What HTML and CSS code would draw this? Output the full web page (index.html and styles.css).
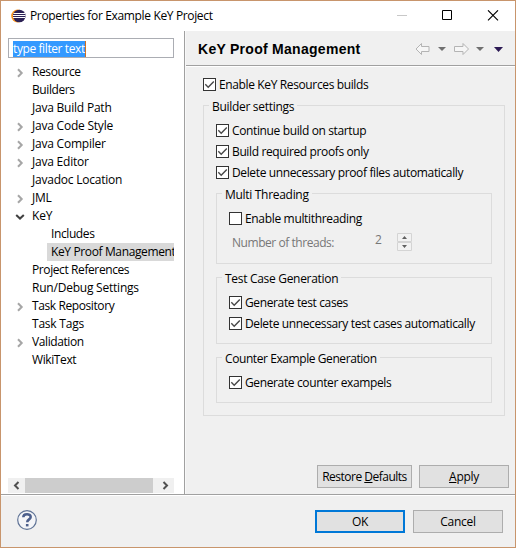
FILE: index.html
```html
<!DOCTYPE html>
<html lang="en">
<head>
<meta charset="utf-8">
<title>Properties for Example KeY Project</title>
<link rel="stylesheet" href="styles.css">
</head>
<body>
<svg width="0" height="0" class="defs">
  <symbol id="check" viewBox="0 0 13 13"><path d="M2.3 6.3 5.2 9.2 10.8 3.4" fill="none" stroke="#484848" stroke-width="1.4"/></symbol>
  <symbol id="closed" viewBox="0 0 8 10"><path d="M2 1.2 5.700 5 2 8.800" fill="none" stroke="#a6a6a6" stroke-width="2"/></symbol>
  <symbol id="open" viewBox="0 0 10 8"><path d="M1.2 2 5 5.6 8.8 2" fill="none" stroke="#404040" stroke-width="2"/></symbol>
</svg>
<div class="window">
  <header class="titlebar">
    <svg class="logo" width="15" height="14" viewBox="0 0 15 14"><circle cx="6.6" cy="7" r="6.4" fill="#f7941e"/><circle cx="8.300" cy="7" r="6.300" fill="#2c2255"/><path d="M2.500 4.500h11.500M2 6.500h12.500M2 8.500h12" stroke="#fff" stroke-width="1"/></svg>
    <span class="caption">Properties for Example KeY Project</span>
    <svg class="controls" width="104" height="12" viewBox="0 0 104 12"><path d="M0 5.5h10" stroke="#c8c8c8"/><path d="M45.500 .5h9v9h-9z" fill="none" stroke="#000"/><path d="m91 .3 10 10m0-10-10 10" stroke="#000" stroke-width="1.1"/></svg>
  </header>
  <div class="main">
    <aside class="sidebar">
      <div class="filter"><span class="selection">type filter text</span></div>
      <ul class="tree">
        <li><svg class="twist"><use href="#closed"/></svg><span class="tight">Resource</span></li>
        <li><i class="twist"></i><span class="tight">Builders</span></li>
        <li><i class="twist"></i><span>Java Build Path</span></li>
        <li><svg class="twist"><use href="#closed"/></svg><span>Java Code Style</span></li>
        <li><svg class="twist"><use href="#closed"/></svg><span>Java Compiler</span></li>
        <li><svg class="twist"><use href="#closed"/></svg><span>Java Editor</span></li>
        <li><i class="twist"></i><span>Javadoc Location</span></li>
        <li><svg class="twist"><use href="#closed"/></svg><span>JML</span></li>
        <li><svg class="twist expanded"><use href="#open"/></svg><span>KeY</span></li>
        <li class="child"><span class="tight">Includes</span></li>
        <li class="child selected"><span>KeY Proof Management</span></li>
        <li><i class="twist"></i><span class="tight">Project References</span></li>
        <li><i class="twist"></i><span>Run/Debug Settings</span></li>
        <li><svg class="twist"><use href="#closed"/></svg><span class="tight">Task Repository</span></li>
        <li><i class="twist"></i><span>Task Tags</span></li>
        <li><svg class="twist"><use href="#closed"/></svg><span class="tight">Validation</span></li>
        <li><i class="twist"></i><span class="tight">WikiText</span></li>
      </ul>
      <div class="scrollbar">
        <svg width="17" height="15" viewBox="0 0 17 15"><path d="M10.500 4 7 7.500l3.500 3.500" fill="none" stroke="#505050" stroke-width="2"/></svg>
        <div class="thumb"></div>
        <svg width="17" height="15" viewBox="0 0 17 15"><path d="M6.500 4 10 7.500 6.500 11" fill="none" stroke="#505050" stroke-width="2"/></svg>
      </div>
    </aside>
    <section class="page">
      <div class="heading">
        <h1>KeY Proof Management</h1>
        <svg width="90" height="14" viewBox="0 0 90 14"><g fill="#f6f6f6" stroke="#b4b4b4"><path d="M1 7 6.500 1.500v3h7.500v5H6.500v3z"/><path d="M53.500 7 48 1.500v3h-8.500v5H48v3z"/></g><path d="M23 5h8l-4 4zM61 5h8l-4 4z" fill="#707070"/><path d="M79 5h9l-4.500 5z" fill="#2c1a54"/></svg>
      </div>
      <div class="content">
        <label class="check top"><svg><use href="#check"/></svg><span>Enable KeY Resources builds</span></label>
        <fieldset class="builder">
          <legend>Builder settings</legend>
          <label class="check"><svg><use href="#check"/></svg><span>Continue build on startup</span></label>
          <label class="check"><svg><use href="#check"/></svg><span>Build required proofs only</span></label>
          <label class="check"><svg><use href="#check"/></svg><span>Delete unnecessary proof files automatically</span></label>
          <fieldset class="threads">
            <legend>Multi Threading</legend>
            <label class="check"><svg></svg><span>Enable multithreading</span></label>
            <div class="number"><span class="name">Number of threads:</span><span class="value">2</span>
              <svg width="15" height="18" viewBox="0 0 15 18"><path d="M.5.500h14v8H.5zM.5 9.500h14v8H.5z" fill="#f2f2f2" stroke="#d4d4d4"/><path d="M5 6 7.500 3 10 6zM5 12l2.500 3L10 12z" fill="#606060"/></svg>
            </div>
          </fieldset>
          <fieldset class="tests">
            <legend>Test Case Generation</legend>
            <label class="check"><svg><use href="#check"/></svg><span>Generate test cases</span></label>
            <label class="check"><svg><use href="#check"/></svg><span>Delete unnecessary test cases automatically</span></label>
          </fieldset>
          <fieldset class="counter">
            <legend>Counter Example Generation</legend>
            <label class="check"><svg><use href="#check"/></svg><span>Generate counter exampels</span></label>
          </fieldset>
        </fieldset>
        <div class="actions"><button class="restore">Restore <u>D</u>efaults</button><button><u>A</u>pply</button></div>
      </div>
    </section>
  </div>
  <footer class="footer">
    <svg class="help" width="20" height="20" viewBox="0 0 20 20"><circle cx="10" cy="10" r="9.300" fill="#f4f5f8" stroke="#5f7396" stroke-width="1.200"/><path d="M6.300 7.300C6.300 3.200 13.700 3.300 13.700 7c0 2.500-3.500 2.300-3.500 5.300" fill="none" stroke="#4c5f8c" stroke-width="2.500"/><path d="M8.900 14h2.600v2.400H8.900z" fill="#4c5f8c"/></svg>
    <button class="default">OK</button><button>Cancel</button>
  </footer>
</div>
</body>
</html>
```
FILE: styles.css
```css
* { box-sizing: border-box; }
body { margin: 0; font: 12px/18px "Open Sans", "Noto Sans", sans-serif; letter-spacing: -0.22px; color: #000; }
.defs { position: absolute; }
svg { display: block; flex: none; }
.window { width: 516px; height: 548px; border: 1px solid #c8956c; background: #f0f0f0; display: flex; flex-direction: column; }
.titlebar { height: 30px; background: #fff; display: flex; align-items: flex-start; padding: 0 0 0 10px; }
.logo { margin-top: 8px; }
.caption { margin: 6px 0 0 4px; flex: 1; white-space: nowrap; letter-spacing: -0.35px; }
.controls { margin: 9px 14px 0 0; }
.main { height: 463px; display: flex; }
.sidebar { width: 184px; background: #fff; border-right: 1px solid #a0a0a0; padding: 7px 10px 0 7px; display: flex; flex-direction: column; }
.filter { width: 166px; height: 20px; border: 1px solid #abadb3; padding: 1px 0 0 4px; }
.selection { display: inline-block; height: 16px; line-height: 15px; background: #3399ff; color: #fff; border-right: 1px solid #d07020; letter-spacing: -0.4px; }
.tree { list-style: none; margin: 5px 0 0; padding: 0; width: 166px; flex: 1; overflow: hidden; }
.tree li { height: 18px; display: flex; align-items: center; white-space: nowrap; overflow: hidden; }
.twist { width: 8px; height: 10px; margin: 2px 8px 0; flex: none; }
.twist.expanded { width: 10px; height: 8px; margin: 2px 7px 0; }
.tight { letter-spacing: -0.4px; }
.child { margin-left: 39px; padding-left: 4px; }
.selected { background: #d9d9d9; letter-spacing: -0.37px; }
.scrollbar { height: 15px; margin-bottom: 1px; width: 166px; background: #f0f0f0; display: flex; }
.thumb { width: 128px; background: #cdcdcd; margin-right: 4px; }
.page { flex: 1; border-left: 1px solid #f8f8f8; }
.heading { height: 36px; border-bottom: 1px solid #fff; box-shadow: inset 0 -1px #a0a0a0; display: flex; justify-content: space-between; align-items: center; padding: 0 10px 0 12px; }
h1 { margin: 1px 0 0; font: bold 14px/18px "Liberation Sans", sans-serif; letter-spacing: 0.28px; }
.content { padding: 11px 6px 0 17px; }
.check { display: flex; height: 21px; align-items: flex-start; white-space: nowrap; letter-spacing: -0.37px; }
.check svg { width: 13px; height: 13px; background: #fff; box-shadow: inset 0 0 0 1px #333; }
.check span { margin: -2px 0 0 3px; }
.check.top { height: 18px; }
fieldset { margin: 0; border: 1px solid #dcdcdc; min-width: 0; padding: 0; position: relative; }
legend { position: absolute; top: -8px; left: 5px; padding: 0 3px; background: #f0f0f0; white-space: nowrap; letter-spacing: -0.3px; }
.counter legend { letter-spacing: -0.42px; }
.builder { width: 302px; height: 311px; margin-top: 9px; padding: 18px 12px 0; }
.builder fieldset { width: 276px; padding: 18px 0 0 12px; }
.threads { height: 71px; margin-top: 6px; }
.threads .check { letter-spacing: -0.33px; }
.tests { height: 67px; margin-top: 13px; }
.counter { height: 46px; margin-top: 13px; }
.number { display: flex; color: #777; }
.name { margin: 1px 0 0 3px; width: 143px; letter-spacing: -0.45px; }
.value { width: 22px; margin-top: -2px; }
.actions { display: flex; justify-content: flex-end; gap: 7px; margin-top: 49px; }
button { font: inherit; letter-spacing: -0.3px; color: #000; width: 90px; height: 23px; border: 1px solid #adadad; background: #e1e1e1; padding: 0; line-height: 19px; white-space: nowrap; }
.restore { width: 95px; letter-spacing: -0.5px; }
.default { border: 2px solid #0078d7; margin-left: auto; margin-right: 8px; line-height: 17px; }
.footer { flex: 1; border-top: 1px solid #a0a0a0; box-shadow: inset 0 1px #fff; display: flex; padding: 15px 12px 0 16px; }
```
